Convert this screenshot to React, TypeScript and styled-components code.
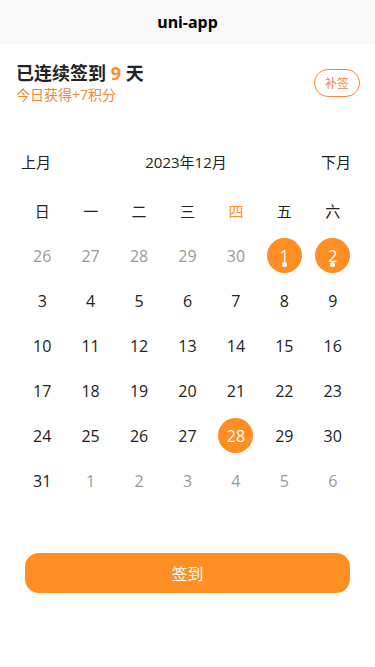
import React from 'react';
import styled, {createGlobalStyle} from 'styled-components';

const ORANGE = '#ff8f22';

const GlobalStyle = createGlobalStyle`
  body {
    margin: 0;
    background: #ffffff;
    font-family: "Open Sans", "Noto Sans CJK SC", sans-serif;
    color: #333333;
  }
`;

const NavBar = styled.div`
  height: 44px;
  background: #f8f8f8;
  display: flex;
  align-items: center;
  justify-content: center;
  font-size: 16px;
  font-weight: bold;
  color: #000000;
  font-family: "Noto Sans", "Noto Sans CJK SC", sans-serif;
`;

const Summary = styled.div`
  display: flex;
  justify-content: space-between;
  align-items: center;
  padding: 16px 15px 0 16px;
`;

const SummaryText = styled.div`
  display: flex;
  flex-direction: column;
`;

const Streak = styled.div`
  font-size: 18px;
  font-weight: bold;
  color: #222222;
  line-height: 26px;
`;

const Count = styled.span`
  color: ${ORANGE};
`;

const Earned = styled.div`
  font-size: 14px;
  color: #f0883a;
  line-height: 18px;
`;

const MakeupButton = styled.div`
  width: 44px;
  height: 26px;
  border: 1px solid #f0883a;
  border-radius: 14px;
  color: #f0883a;
  font-size: 12px;
  display: flex;
  align-items: center;
  justify-content: center;
  margin-top: 2px;
`;

const Calendar = styled.div`
  padding: 39px 18px 0 18px;
`;

const MonthBar = styled.div`
  display: flex;
  justify-content: space-between;
  align-items: center;
  height: 36px;
  font-size: 15px;
  color: #222222;
  padding: 0 6px 0 3px;
`;

const Grid = styled.div`
  display: grid;
  grid-template-columns: repeat(7, 1fr);
  margin-top: 9px;
`;

const WeekDay = styled.div<{$today?: boolean}>`
  height: 45px;
  display: flex;
  align-items: center;
  justify-content: center;
  font-size: 15px;
  color: ${p => (p.$today ? ORANGE : '#222222')};
`;

const Cell = styled.div`
  height: 45px;
  display: flex;
  align-items: center;
  justify-content: center;
`;

const Day = styled.div<{$other?: boolean; $active?: boolean}>`
  position: relative;
  width: 35px;
  height: 35px;
  border-radius: 50%;
  display: flex;
  align-items: center;
  justify-content: center;
  font-size: 16px;
  background: ${p => (p.$active ? ORANGE : 'transparent')};
  color: ${p => (p.$active ? '#ffffff' : p.$other ? '#999999' : '#222222')};
`;

const Dot = styled.span`
  position: absolute;
  left: 50%;
  bottom: 6px;
  width: 5px;
  height: 5px;
  margin-left: -2.5px;
  border-radius: 50%;
  background: #ffffff;
`;

const SignButton = styled.div`
  margin: 50px 25px 0 25px;
  height: 40px;
  border-radius: 14px;
  background: ${ORANGE};
  color: #ffffff;
  font-size: 16px;
  display: flex;
  align-items: center;
  justify-content: center;
`;

type DayInfo = {n: number; other?: boolean; active?: boolean; signed?: boolean};

const days: DayInfo[] = [
    ...[26, 27, 28, 29, 30].map(n => ({n, other: true})),
    {n: 1, active: true, signed: true},
    {n: 2, active: true, signed: true},
    ...Array.from({length: 29}, (_, i) => ({n: i + 3, active: i + 3 === 28})),
    ...[1, 2, 3, 4, 5, 6].map(n => ({n, other: true})),
];

const weekdays = ['日', '一', '二', '三', '四', '五', '六'];

export default function App() {
    return (
        <>
            <GlobalStyle/>
            <NavBar>uni-app</NavBar>
            <Summary>
                <SummaryText>
                    <Streak>已连续签到 <Count>9</Count> 天</Streak>
                    <Earned>今日获得+7积分</Earned>
                </SummaryText>
                <MakeupButton>补签</MakeupButton>
            </Summary>
            <Calendar>
                <MonthBar>
                    <span>上月</span>
                    <span>2023年12月</span>
                    <span>下月</span>
                </MonthBar>
                <Grid>
                    {weekdays.map((w, i) => (
                        <WeekDay key={w} $today={i === 4}>{w}</WeekDay>
                    ))}
                    {days.map((d, i) => (
                        <Cell key={i}>
                            <Day $other={d.other} $active={d.active}>
                                {d.n}
                                {d.signed && <Dot/>}
                            </Day>
                        </Cell>
                    ))}
                </Grid>
            </Calendar>
            <SignButton>签到</SignButton>
        </>
    );
}
